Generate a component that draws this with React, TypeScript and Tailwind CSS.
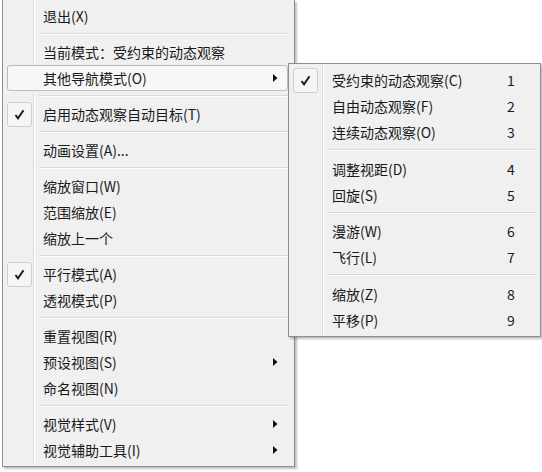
import React from "react";

type Item =
  | { type: "sep" }
  | { type: "item"; label: string; checked?: boolean; arrow?: boolean; hot?: boolean; num?: string };

const mainItems: Item[] = [
  { type: "item", label: "退出(X)" },
  { type: "sep" },
  { type: "item", label: "当前模式：受约束的动态观察" },
  { type: "item", label: "其他导航模式(O)", arrow: true, hot: true },
  { type: "sep" },
  { type: "item", label: "启用动态观察自动目标(T)", checked: true },
  { type: "sep" },
  { type: "item", label: "动画设置(A)..." },
  { type: "sep" },
  { type: "item", label: "缩放窗口(W)" },
  { type: "item", label: "范围缩放(E)" },
  { type: "item", label: "缩放上一个" },
  { type: "sep" },
  { type: "item", label: "平行模式(A)", checked: true },
  { type: "item", label: "透视模式(P)" },
  { type: "sep" },
  { type: "item", label: "重置视图(R)" },
  { type: "item", label: "预设视图(S)", arrow: true },
  { type: "item", label: "命名视图(N)" },
  { type: "sep" },
  { type: "item", label: "视觉样式(V)", arrow: true },
  { type: "item", label: "视觉辅助工具(I)", arrow: true },
];

const subItems: Item[] = [
  { type: "item", label: "受约束的动态观察(C)", checked: true, num: "1" },
  { type: "item", label: "自由动态观察(F)", num: "2" },
  { type: "item", label: "连续动态观察(O)", num: "3" },
  { type: "sep" },
  { type: "item", label: "调整视距(D)", num: "4" },
  { type: "item", label: "回旋(S)", num: "5" },
  { type: "sep" },
  { type: "item", label: "漫游(W)", num: "6" },
  { type: "item", label: "飞行(L)", num: "7" },
  { type: "sep" },
  { type: "item", label: "缩放(Z)", num: "8" },
  { type: "item", label: "平移(P)", num: "9" },
];

function Check() {
  return (
    <div className="w-[25px] h-[25px] rounded-[3px] border border-[#cfcfcf] bg-[#f5f5f5] flex items-center justify-center">
      <svg width="11" height="11" viewBox="0 0 11 11">
        <path d="M1.5 6 L4 9.3 L9.5 1.2" fill="none" stroke="#1a1a1a" strokeWidth="2" strokeLinejoin="miter" />
      </svg>
    </div>
  );
}

function Arrow() {
  return (
    <svg width="5" height="8" viewBox="0 0 5 8">
      <path d="M0 0 L4.5 4 L0 8 Z" fill="#111" />
    </svg>
  );
}

function MainMenu() {
  return (
    <div className="ml-[2px] w-[293px] border border-t-0 border-[#8e8e8e] bg-[linear-gradient(to_right,#f0f0f0_30px,#dcdcdc_30px,#dcdcdc_31px,#ffffff_31px,#ffffff_32px,#f0f0f0_32px)] pt-[3px] pb-[3px] shadow-[2px_2px_2px_rgba(0,0,0,0.25)]">
      {mainItems.map((it, i) =>
        it.type === "sep" ? (
          <div key={i} className="h-[10px] flex items-center ml-[36px] mr-[5px]">
            <div className="w-full border-t border-[#dadada] border-b border-b-white" />
          </div>
        ) : (
          <div
            key={i}
            className={
              "h-[26px] ml-[4px] mr-[6px] flex items-center rounded-[3px] border " +
              (it.hot ? "border-[#bdbdbd] bg-[#f7f7f7]" : "border-transparent")
            }
          >
            <div className="w-[25px] flex items-center justify-center -ml-px">
              {it.checked ? <Check /> : null}
            </div>
            <div className="ml-[11px] flex-1 text-[14px] leading-none text-[#1a1a1a] whitespace-nowrap">{it.label}</div>
            <div className="w-[10px] mr-[4px] flex items-center">{it.arrow ? <Arrow /> : null}</div>
          </div>
        )
      )}
    </div>
  );
}

function SubMenu() {
  return (
    <div className="absolute left-[288px] top-[63px] w-[253px] border border-[#8e8e8e] bg-[linear-gradient(to_right,#f0f0f0_33px,#dcdcdc_33px,#dcdcdc_34px,#ffffff_34px,#ffffff_35px,#f0f0f0_35px)] py-[3px] shadow-[2px_2px_2px_rgba(0,0,0,0.25)]">
      {subItems.map((it, i) =>
        it.type === "sep" ? (
          <div key={i} className="h-[10.5px] flex items-center ml-[39px] mr-[4px]">
            <div className="w-full border-t border-[#dadada] border-b border-b-white" />
          </div>
        ) : (
          <div key={i} className="h-[26px] ml-[4px] mr-[4px] flex items-center rounded-[3px] border border-transparent">
            <div className="w-[25px] flex items-center justify-center -ml-px">
              {it.checked ? <Check /> : null}
            </div>
            <div className="ml-[14px] flex-1 text-[14px] leading-none text-[#1a1a1a] whitespace-nowrap">{it.label}</div>
            <div className="w-[20px] mr-[14px] text-center text-[14px] leading-none text-[#1a1a1a]">{it.num}</div>
          </div>
        )
      )}
    </div>
  );
}

export default function App() {
  return (
    <div
      className="relative w-[542px] h-[472px] bg-white overflow-hidden"
      style={{ fontFamily: '"Noto Sans CJK SC", "Noto Sans", sans-serif' }}
    >
      <MainMenu />
      <SubMenu />
    </div>
  );
}
